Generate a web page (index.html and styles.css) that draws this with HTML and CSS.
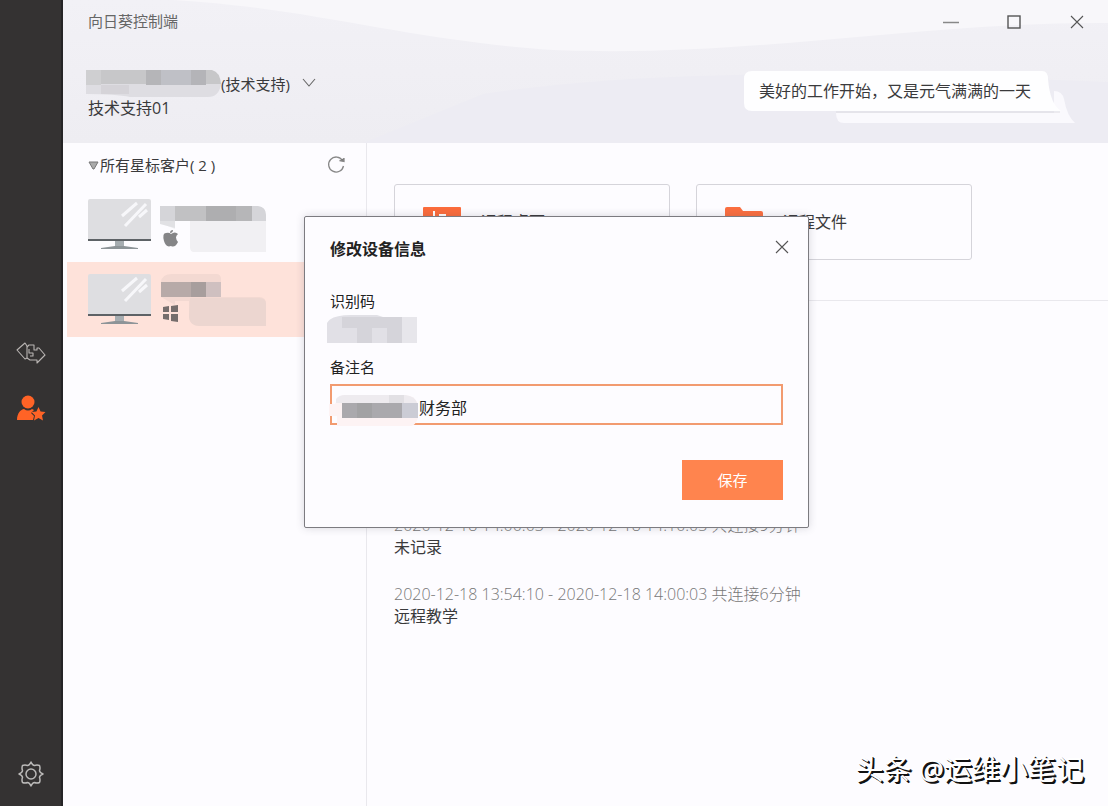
FILE: index.html
```html
<!DOCTYPE html>
<html lang="zh-CN">
<head>
<meta charset="utf-8">
<title>向日葵控制端</title>
<link rel="stylesheet" href="styles.css">
</head>
<body>
<div class="app">
  <nav class="sidebar">
    <button class="nav-btn" aria-label="远程">
      <svg width="30" height="24" viewBox="0 0 30 24" fill="none" stroke="#b9b5b3" stroke-width="1.1" stroke-linejoin="round"><path d="M1 9 L9 2 L11 5 V17 L9 18 Z"/><path d="M11 6 L13 4 H18 V9 H21 V7 L23 7 L29 14 L21 22 V19 H14 L11 17 M13 8 V12 H17 V15 H14"/></svg>
    </button>
    <button class="nav-btn" aria-label="星标客户">
      <svg width="30" height="26" viewBox="0 0 30 26" fill="#ff6326"><circle cx="12" cy="7" r="6.5"/><path d="M1 25 C1 18 5 14.500 8 14 Q12 17 16 14 L18 15 L15 18 L18 21 L17 25 Z"/><path d="M22.500 12 L24.600 16.500 L29.500 17.100 L26 20.600 L27 25.500 L22.500 23 L18 25.500 L19 20.600 L15.500 17.100 L20.400 16.500 Z"/></svg>
    </button>
    <button class="nav-btn nav-settings" aria-label="设置">
      <svg width="26" height="26" viewBox="0 0 26 26" fill="none" stroke="#bab9b8" stroke-width="1.500" stroke-linejoin="round"><path d="M13 1 Q14.500 4.500 16.500 4.500 Q19 3.500 21.500 4.500 Q22.500 7 21.500 9.500 Q21.500 11.500 25 13 Q21.500 14.500 21.500 16.500 Q22.500 19 21.500 21.500 Q19 22.500 16.500 21.500 Q14.500 21.500 13 25 Q11.500 21.500 9.500 21.500 Q7 22.500 4.500 21.500 Q3.500 19 4.500 16.500 Q4.500 14.500 1 13 Q4.500 11.500 4.500 9.500 Q3.500 7 4.500 4.500 Q7 3.500 9.500 4.500 Q11.500 4.500 13 1 Z"/><circle cx="13" cy="13" r="5"/></svg>
    </button>
  </nav>
  <div class="window">
    <header class="header">
      <svg class="waves" viewBox="0 0 1045 143" preserveAspectRatio="none" aria-hidden="true">
        <path d="M110 0 C250 8 340 40 490 50 C690 58 850 22 1045 23 V0 Z" fill="#f8f7fa"/>
        <path d="M420 94 C560 74 720 68 1045 82 V143 H300 Z" fill="#edecf3"/>
      </svg>
      <div class="titlebar">
        <span class="app-name">向日葵控制端</span>
        <div class="controls">
          <button aria-label="最小化"><svg width="16" height="16" viewBox="0 0 16 16" stroke="#888" stroke-width="1.500"><path d="M0 8.500 H16"/></svg></button>
          <button aria-label="最大化"><svg width="14" height="14" viewBox="0 0 14 14" fill="none" stroke="#555" stroke-width="1.400"><rect x="1" y="1" width="12" height="12"/></svg></button>
          <button aria-label="关闭窗口"><svg width="14" height="14" viewBox="0 0 14 14" stroke="#555" stroke-width="1.100"><path d="M1 1 L13 13 M13 1 L1 13"/></svg></button>
        </div>
      </div>
      <div class="header-body">
        <div class="account">
          <button class="account-name">
            <svg width="135" height="27" viewBox="0 0 135 27" aria-hidden="true"><path d="M0 14 H135 Q133 27 122 27 H44 Q30 24 0 24 Z" fill="#dedde2"/><path d="M0 0 H126 Q134 2 135 14 H0 Z" fill="#c7c7c9"/><path d="M0 0H15V15H0Z" fill="#cfcfd1"/><path d="M60 0H75V15H60Z" fill="#b5b5b8"/><path d="M75 0H105V15H75Z" fill="#bfc0c6"/><path d="M105 0H120V15H105Z" fill="#b4b4b8"/><path d="M15 15H43V24H15Z" fill="#d5d3d8"/></svg>
            <span>(技术支持)</span>
            <svg class="chevron" width="14" height="12" viewBox="0 0 14 12" fill="none" stroke="#666" stroke-width="1.100"><path d="M1 1 L7 8 L13 1"/></svg>
          </button>
          <div class="user">技术支持01</div>
        </div>
        <div class="greeting">
          <svg class="greeting-bg" viewBox="0 0 332 54" aria-hidden="true"><path d="M92 42 H310 V20 Q318 20 320 28 Q323 45 331 52 H100 Q92 52 92 42 Z" fill="#faf9fd"/><path d="M8 0 H298 Q304 0 304 8 Q306 33 317 40 H8 Q0 40 0 32 V8 Q0 0 8 0 Z" fill="#fefeff"/><path d="M92 41 H316" stroke="#dddce2"/></svg>
          <span class="greeting-text">美好的工作开始，又是元气满满的一天</span>
        </div>
      </div>
    </header>
    <div class="content">
      <aside class="clients">
        <div class="clients-head">
          <svg width="11" height="9" viewBox="0 0 11 9"><path d="M1 1 H10 L6 8 H5 Z" fill="#aaa" stroke="#777"/></svg>
          <h2>所有星标客户( 2 )</h2>
          <button class="refresh" aria-label="刷新"><svg width="18" height="18" viewBox="0 0 18 18" fill="none" stroke="#888" stroke-width="1.300"><path d="M15.500 4.500 A7.500 7.500 0 1 0 16.500 10"/><path d="M12.500 4.500 L17 5.500 L17 2" fill="#777"/></svg></button>
        </div>
        <ul class="client-list">
          <li class="client">
            <svg width="63" height="51" viewBox="0 0 63 51" aria-hidden="true"><rect width="63" height="42" rx="2" fill="#dedee1"/><path d="M0 40H63V42H0Z" fill="#5d6266"/><path d="M27 42H36V48H27Z" fill="#a6adb1"/><path d="M13 49 L27 47 H36 L50 49 V50 H13Z" fill="#8d9498"/><path d="M34 17 L49 4 M37 27 L58 5 M51 18 L59 11" stroke="#f7f7fa" stroke-width="3"/></svg>
            <svg width="107" height="54" viewBox="0 0 107 54" aria-hidden="true"><path d="M0 7 H98 Q106 8 106 16 V53 H34 Q30 53 30 48 V22 H15 V30 L0 24 Z" fill="#f1f0f3"/><path d="M0 7H98Q106 8 106 16V22H0Z" fill="#d5d5d9"/><path d="M15 7H46V22H15Z" fill="#c1c1c3"/><path d="M46 7H76V22H46Z" fill="#aeaeb0"/><path d="M76 7H92V22H76Z" fill="#b6b6b8"/><path d="M0 22H15V29L0 25Z" fill="#e1e1e4"/><path d="M11 35 Q15 32 18 35 Q14 38 18 43 Q15 49 11 47 Q6 49 4 42 Q2 34 6 34 Q9 33 11 35 Z M10 34 Q10 31 13 31 Q13 34 10 34" fill="#858587"/></svg>
          </li>
          <li class="client selected">
            <svg width="63" height="51" viewBox="0 0 63 51" aria-hidden="true"><rect width="63" height="42" rx="2" fill="#dedee1"/><path d="M0 40H63V42H0Z" fill="#5d6266"/><path d="M27 42H36V48H27Z" fill="#a6adb1"/><path d="M13 49 L27 47 H36 L50 49 V50 H13Z" fill="#8d9498"/><path d="M34 17 L49 4 M37 27 L58 5 M51 18 L59 11" stroke="#f7f7fa" stroke-width="3"/></svg>
            <svg width="107" height="54" viewBox="0 0 107 54" aria-hidden="true"><path d="M1 8 Q2 0 12 0 H56 Q61 0 61 5 V23 H99 Q106 23 106 30 V52 H40 Q29 51 29 42 V27 H15 V31 L1 23 Z" fill="#f3d9d2"/><path d="M1 8H61V23H1Z" fill="#b7aaa8"/><path d="M31 8H46V23H31Z" fill="#a79e9d"/><path d="M46 8H61V23H46Z" fill="#cfc0c0"/><path d="M30 24H99Q106 24 106 30V52H40Q29 52 29 42Z" fill="#ecd6d0"/><path d="M3 33L9 32V38H3ZM11 32L18 31V38H11ZM3 40H9V46L3 45ZM11 40H18V48L11 47Z" fill="#756d6c"/></svg>
          </li>
        </ul>
      </aside>
      <main class="detail">
        <div class="cards">
          <button class="card">
            <svg width="38" height="30" viewBox="0 0 38 30" aria-hidden="true"><rect width="38" height="26" rx="1" fill="#fb6c3c"/><path d="M11 4V20M16 8H22V18" stroke="#fff" stroke-width="2" fill="none"/></svg>
            <span>远程桌面</span>
          </button>
          <button class="card">
            <svg width="38" height="30" viewBox="0 0 38 30" aria-hidden="true"><path d="M0 2 Q0 0 2 0 H15 L18 4 H36 Q38 4 38 6 V28 H0Z" fill="#fb6f40"/></svg>
            <span>远程文件</span>
          </button>
        </div>
        <ul class="history">
          <li><time>2020-12-18 14:00:03 - 2020-12-18 14:10:03 共连接9分钟</time><p>未记录</p></li>
          <li><time>2020-12-18 13:54:10 - 2020-12-18 14:00:03 共连接6分钟</time><p>远程教学</p></li>
        </ul>
      </main>
    </div>
  </div>
  <form class="dialog" role="dialog" aria-labelledby="dialog-title">
    <div class="dialog-head">
      <h1 id="dialog-title">修改设备信息</h1>
      <button type="button" class="close" aria-label="关闭"><svg width="14" height="14" viewBox="0 0 14 14" stroke="#555" stroke-width="1.100"><path d="M1 1 L13 13 M13 1 L1 13"/></svg></button>
    </div>
    <div class="label">识别码</div>
    <svg class="code" width="90" height="28" viewBox="0 0 90 28" aria-hidden="true"><path d="M0 8 Q4 0 24 0 H50 L56 2 H90 V28 H0Z" fill="#e1e0e6"/><path d="M15 2H75V13H15ZM30 13H45V28H30ZM60 13H75V28H60Z" fill="#d5d4da"/><path d="M75 2H90V28H75Z" fill="#e7e6eb"/></svg>
    <label class="label" for="remark">备注名</label>
    <div class="field">
      <input id="remark" type="text" value="财务部">
      <svg class="mask" width="90" height="32" viewBox="0 0 90 32" aria-hidden="true"><path d="M0 10 H6 Q10 1 16 1 H76 Q88 2 89 12 V24 Q86 32 82 32 H8 V22 H0Z" fill="#fdf3f4"/><path d="M7 5Q10 1 16 1H76Q86 2 88 9H7Z" fill="#eeebef"/><path d="M60 1H75V9H60Z" fill="#e2e0e4"/><path d="M13 9H73V24H13Z" fill="#aaa9ad"/><path d="M28 9H43V24H28Z" fill="#a2a2a4"/><path d="M73 9H89V24H73Z" fill="#cbccd5"/></svg>
    </div>
    <button type="submit" class="save">保存</button>
  </form>
  <div class="watermark">头条 @运维小笔记</div>
</div>
</body>
</html>
```

FILE: styles.css
```css
* { box-sizing: border-box; }
body, h1, h2, p, ul { margin: 0; padding: 0; }
ul { list-style: none; }
svg { display: block; flex: none; }
body {
  font: 16px/22px "Open Sans", "Noto Sans CJK SC", sans-serif;
  color: #3a3a3c;
  background: #fdfcff;
}
button {
  padding: 0;
  border: 0;
  background: none;
  color: inherit;
  font: inherit;
}
.app { position: relative; display: flex; min-height: 100vh; overflow: hidden; }

.sidebar {
  display: flex;
  flex-direction: column;
  align-items: center;
  gap: 30px;
  width: 63px;
  padding: 341px 0 19px;
  background: #343232;
  border-right: 2px solid #252426;
}
.nav-settings { margin-top: auto; }

.window { flex: 1; display: flex; flex-direction: column; min-width: 0; }
.header {
  position: relative;
  padding-bottom: 24px;
  background: linear-gradient(#f2f1f6, #eeedf2);
}
.waves { position: absolute; inset: 0; width: 100%; height: 100%; }
.titlebar {
  position: relative;
  display: flex;
  justify-content: space-between;
  height: 43px;
  padding-left: 25px;
}
.app-name { font-size: 15px; line-height: 43px; color: #666; }
.controls { display: flex; }
.controls button { display: grid; place-items: center; width: 63px; }
.header-body {
  position: relative;
  display: flex;
  justify-content: space-between;
  align-items: flex-start;
  padding: 27px 58px 0 23px;
}
.account-name { display: flex; align-items: center; font-size: 15px; }
.chevron { margin-left: 12px; }
.user { padding-left: 2px; }
.greeting { position: relative; padding: 10px 19px 8px 15px; }
.greeting-bg { position: absolute; left: 0; top: 1px; width: 332px; height: 54px; }
.greeting-text { position: relative; }

.content { flex: 1; display: flex; }
.clients { width: 304px; border-right: 1px solid #e9e8ed; }
.clients-head {
  display: flex;
  align-items: center;
  gap: 1px;
  height: 44px;
  padding: 0 21px 0 25px;
}
.clients-head h2 { font-size: 15px; font-weight: 400; }
.refresh { margin-left: auto; }
.client {
  display: flex;
  gap: 9px;
  height: 75px;
  margin-left: 4px;
  padding: 12px 0 0 21px;
}
.client.selected { background: #fee2da; }

.detail { flex: 1; min-width: 0; }
.cards {
  display: flex;
  gap: 26px;
  padding: 41px 28px 40px 27px;
  border-bottom: 1px solid #e9e8ed;
}
.card {
  display: flex;
  align-items: center;
  gap: 20px;
  width: 276px;
  height: 76px;
  padding-left: 28px;
  border: 1px solid #d5d4da;
  border-radius: 3px;
}
.history {
  display: flex;
  flex-direction: column;
  gap: 25px;
  padding: 213px 28px 0 27px;
}
.history time { display: block; font-weight: 300; color: #777; }

.dialog {
  position: absolute;
  left: calc(50% - 250px);
  top: 216px;
  width: 505px;
  padding: 21px 25px 27px;
  background: #fdfcff;
  border: 1px solid #7c7b80;
  border-radius: 2px;
  box-shadow: 0 0 8px rgba(60, 60, 80, 0.2);
  color: #222;
}
.dialog-head {
  display: flex;
  justify-content: space-between;
  align-items: flex-start;
  margin: 0 -6px 30px 0;
}
.dialog h1 { font-size: 16px; font-weight: 700; line-height: 22px; }
.close { padding: 2px 0; }
.label { display: block; font-size: 15px; }
.code { margin: 3px 0 13px -3px; }
.field { position: relative; margin: 6px 0 35px; }
.field input {
  display: block;
  width: 100%;
  height: 41px;
  padding: 4px 12px 0 87px;
  border: 2px solid #f29b70;
  border-radius: 0;
  outline: 0;
  background: transparent;
  color: #222;
  font: inherit;
}
.mask { position: absolute; left: -1px; top: 10px; }
.save {
  display: block;
  width: 101px;
  height: 40px;
  margin-left: auto;
  background: #ff844e;
  color: #fff;
  font-size: 15px;
}

.watermark {
  position: absolute;
  right: 24px;
  bottom: 17px;
  font-size: 28px;
  line-height: 40px;
  color: #fff;
  text-shadow: 1px 1px 0 #111, 2px 2px 0 #111;
}
```
